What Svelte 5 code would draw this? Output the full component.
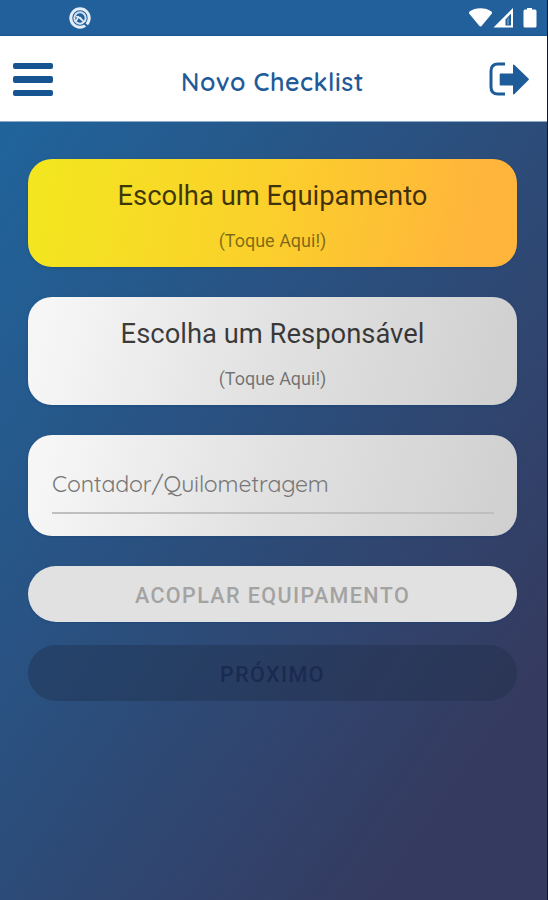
<script>
  const choices = [
    { title: 'Escolha um Equipamento', tone: 'gold' },
    { title: 'Escolha um Responsável', tone: 'silver' }
  ];
</script>

<div class="screen">
  <div class="status">
    <svg class="app" width="24" height="24" viewBox="0 0 24 24" fill="none">
      <circle cx="12" cy="12" r="9.2" stroke="#e4edf8" stroke-width="3" />
      <circle cx="12" cy="12" r="5.7" stroke="#d5e2f1" stroke-width="2" />
      <path d="M8 15l2.5-4 5.5 5M8 10.5l4 1 4 4.5" stroke="#e4edf8" stroke-width="1.5" />
      <path d="M16 17l4 4" stroke="#22609c" stroke-width="2" />
    </svg>
    <svg class="signals" width="72" height="22" viewBox="0 0 72 22">
      <path d="M1.500 3.500C7-1 18-1 23.500 3.500Q24.500 5 23.500 6L14 17.500Q12.500 19.500 11 17.500L1.500 6Q.5 5 1.500 3.500z" fill="#fff" />
      <path d="M45 0v19.500H25.500z" fill="#fff" />
      <path d="M43 5.500V17.500h-5.500v-6z" fill="#22609c" />
      <path d="M41 9v7.500h-2v-5z" fill="#5f8dba" />
      <path d="M59 0h5v1.500h3q1.500 0 1.500 1.500v15q0 1.500-1.500 1.500h-10q-1.500 0-1.500-1.500v-15q0-1.500 1.500-1.500h2z" fill="#fff" />
    </svg>
  </div>
  <header>
    <button class="menu" aria-label="Menu"><i></i><i></i><i></i></button>
    <h1>Novo Checklist</h1>
    <button class="exit" aria-label="Sair">
      <svg width="42" height="36" viewBox="0 0 42 36">
        <path d="M17 3H10Q3 3 3 10v16q0 7 7 7h7" fill="none" stroke="#1d5c99" stroke-width="3" />
        <path d="M12.500 12.500H25V4.500q0-1.500 1.500-.5L40.500 17.500q.8.800 0 1.600L26.500 33q-1.500 1-1.500-.5V24.500H12.500q-.8 0-.8-.8v-10.400q0-.8.8-.8z" fill="#1d5c99" />
      </svg>
    </button>
  </header>
  <main>
    {#each choices as choice}
      <button class="card choice {choice.tone}">
        <span class="title">{choice.title}</span>
        <span class="hint">(Toque Aqui!)</span>
      </button>
    {/each}
    <div class="card field silver">
      <div class="input"><span>Contador/Quilometragem</span></div>
    </div>
    <button class="pill couple">ACOPLAR EQUIPAMENTO</button>
    <button class="pill next">PRÓXIMO</button>
  </main>
</div>

<style>
  :global(body) { margin: 0; }
  .screen {
    box-sizing: border-box;
    height: 900px;
    display: flex;
    flex-direction: column;
    border-right: 1px solid #10182f;
    background: #fff;
    font-family: Roboto, sans-serif;
    overflow: hidden;
  }
  button { margin: 0; padding: 0; border: 0; background: none; font: inherit; }
  .status {
    flex: none;
    box-sizing: border-box;
    height: 36px;
    padding: 0 7px 0 68px;
    display: flex;
    justify-content: space-between;
    align-items: center;
    background: #22609c;
    border-bottom: 1px solid #1a5391;
  }
  .status svg { display: block; }
  .status .signals { margin-top: 2px; }
  header {
    flex: none;
    box-sizing: border-box;
    height: 86px;
    padding: 0 17px 0 13px;
    display: flex;
    justify-content: space-between;
    align-items: center;
    border-bottom: 1px solid #8ba9c9;
  }
  .menu { width: 42px; margin-top: 2px; display: flex; flex-direction: column; gap: 7px; }
  .menu i { width: 40px; height: 6.500px; border-radius: 2px; background: #165492; }
  h1 {
    margin: 6px 0 0 2px;
    font: 600 25px/32px Quicksand, Lato, sans-serif;
    letter-spacing: 0.550px;
    color: #1f5b98;
    white-space: nowrap;
  }
  .exit svg { display: block; }
  main {
    flex: 1;
    padding: 37px 30px 0 28px;
    display: flex;
    flex-direction: column;
    background: linear-gradient(to bottom right, #20649c 0%, #353b60 84%);
  }
  .card { border-radius: 24px; box-shadow: 0 1px 3px #0a397355; margin-bottom: 30px; }
  .choice {
    height: 108px;
    display: flex;
    flex-direction: column;
    align-items: center;
  }
  .gold { background: linear-gradient(100deg, #f3e520 5%, #fbd02b 48%, #ffb53b 90%); }
  .silver { background: linear-gradient(105deg, #f6f6f6 5%, #e2e2e2 48%, #d0d0d0 98%); }
  .title { margin-top: 19px; font-size: 27.400px; line-height: 36px; color: #000000bf; white-space: nowrap; }
  .hint { margin-top: 16px; font-size: 18px; line-height: 22px; color: #00000080; white-space: nowrap; }
  .field { box-sizing: border-box; height: 101px; padding: 32px 23px 0 24px; }
  .input { height: 45px; border-bottom: 2px solid #bfbfbf; }
  .input span {
    display: block;
    font: 400 23px/33px Quicksand, Lato, sans-serif;
    letter-spacing: -0.130px;
    color: #777;
    white-space: nowrap;
  }
  .pill {
    box-sizing: border-box;
    height: 56px;
    padding-top: 3px;
    border-radius: 28px;
    font-size: 21.500px;
    font-weight: 500;
    letter-spacing: 1.400px;
    text-align: center;
    white-space: nowrap;
  }
  .couple { background: #e1e1e1; color: #a3a3a3; box-shadow: 0 1px 2px #0a397355; }
  .next { margin-top: 23px; background: #1d2c4966; color: #1b2a50; }
</style>
